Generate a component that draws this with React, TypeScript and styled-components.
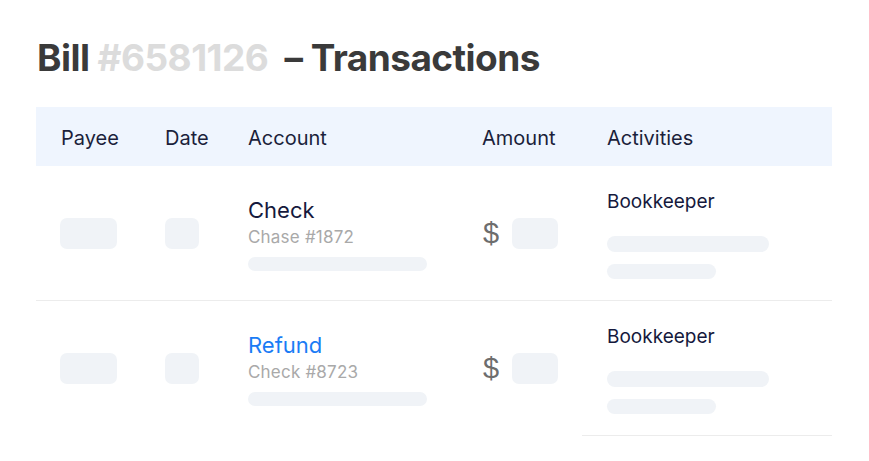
import React from "react";
import styled, { createGlobalStyle } from "styled-components";

const Global = createGlobalStyle`
  html, body { margin: 0; padding: 0; background: #ffffff; }
  body { font-family: Inter, "Noto Sans", sans-serif; }
`;

const Page = styled.div`
  padding: 34px 37px 0 36px;
  width: 796px;
`;

const Title = styled.h1`
  margin: 0 0 0 1px;
  font-size: 37px;
  line-height: 48px;
  font-weight: 700;
  color: #3a3a3a;
  letter-spacing: -0.55px;
  white-space: pre;
`;

const Hash = styled.span`
  color: #dcdcdc;
`;

const Table = styled.div`
  margin-top: 25px;
  display: flex;
  flex-direction: column;
`;

const HeaderRow = styled.div`
  display: grid;
  grid-template-columns: 129px 83px 234px 100px 250px;
  height: 57px;
  padding-top: 2px;
  align-items: center;
  background: #eff5fe;
`;

const HeaderCell = styled.div<{ $pad?: number }>`
  padding-left: ${(p) => p.$pad ?? 0}px;
  font-size: 20px;
  color: #1b1f3b;
`;

const Row = styled.div`
  display: flex;
`;

const LeftGroup = styled.div<{ $divider: boolean }>`
  display: grid;
  grid-template-columns: 129px 83px 234px 100px;
  align-items: center;
  height: 134px;
  border-bottom: 1px solid ${(p) => (p.$divider ? "#ececec" : "transparent")};
`;

const Cell = styled.div<{ $pad?: number }>`
  padding-left: ${(p) => p.$pad ?? 0}px;
  display: flex;
  align-items: center;
`;

const Block = styled.div<{ $w: number; $h?: number }>`
  width: ${(p) => p.$w}px;
  height: ${(p) => p.$h ?? 31}px;
  border-radius: 7px;
  background: #f0f3f7;
`;

const AccountStack = styled.div`
  display: flex;
  flex-direction: column;
`;

const AccountName = styled.div<{ $link?: boolean }>`
  font-size: 22px;
  line-height: 28px;
  color: ${(p) => (p.$link ? "#1a7cf5" : "#15193d")};
`;

const AccountSub = styled.div`
  margin-top: 3px;
  font-size: 17px;
  line-height: 20px;
  letter-spacing: 0.2px;
  color: #a9a9a9;
`;

const Bar = styled.div<{ $w: number; $h: number; $mt: number }>`
  width: ${(p) => p.$w}px;
  height: ${(p) => p.$h}px;
  margin-top: ${(p) => p.$mt}px;
  border-radius: 8px;
  background: #f0f3f7;
`;

const Dollar = styled.span`
  font-family: "Liberation Sans", Arial, sans-serif;
  font-size: 29px;
  color: #6d6d6d;
  margin-right: 13px;
  margin-left: 1px;
`;

const ActivityCell = styled.div`
  width: 225px;
  height: 131px;
  padding: 3px 0 0 25px;
  display: flex;
  flex-direction: column;
  justify-content: center;
  border-bottom: 1px solid #ececec;
`;

const ActivityName = styled.div`
  font-size: 19px;
  line-height: 24px;
  color: #15193d;
`;

type Tx = { name: string; sub: string; link?: boolean };

const rows: Tx[] = [
  { name: "Check", sub: "Chase #1872" },
  { name: "Refund", sub: "Check #8723", link: true },
];

export default function App() {
  return (
    <>
      <Global />
      <Page>
        <Title>
          Bill <Hash>#6581126</Hash>  – Transactions
        </Title>
        <Table>
          <HeaderRow>
            <HeaderCell $pad={25}>Payee</HeaderCell>
            <HeaderCell>Date</HeaderCell>
            <HeaderCell>Account</HeaderCell>
            <HeaderCell>Amount</HeaderCell>
            <HeaderCell $pad={25}>Activities</HeaderCell>
          </HeaderRow>
          {rows.map((r, i) => (
            <Row key={r.sub}>
              <LeftGroup $divider={i < rows.length - 1}>
                <Cell $pad={24}>
                  <Block $w={57} />
                </Cell>
                <Cell>
                  <Block $w={34} />
                </Cell>
                <Cell>
                  <AccountStack>
                    <AccountName $link={r.link}>{r.name}</AccountName>
                    <AccountSub>{r.sub}</AccountSub>
                    <Bar $w={179} $h={14} $mt={10} />
                  </AccountStack>
                </Cell>
                <Cell>
                  <Dollar>$</Dollar>
                  <Block $w={46} />
                </Cell>
              </LeftGroup>
              <ActivityCell>
                <ActivityName>Bookkeeper</ActivityName>
                <Bar $w={162} $h={16} $mt={22} />
                <Bar $w={109} $h={15} $mt={12} />
              </ActivityCell>
            </Row>
          ))}
        </Table>
      </Page>
    </>
  );
}
